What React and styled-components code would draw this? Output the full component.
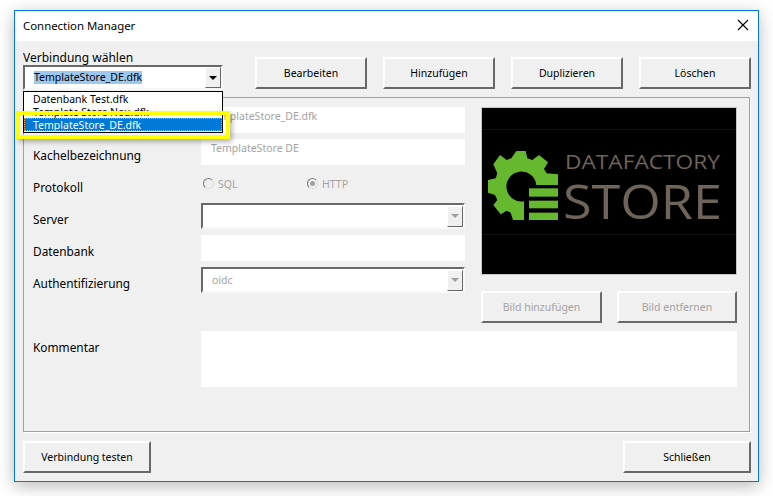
import React from "react";
import styled, { createGlobalStyle } from "styled-components";

const Global = createGlobalStyle`
  html, body { margin: 0; padding: 0; background: #fff; }
  body { font-family: "Noto Sans", Tahoma, sans-serif; font-size: 10.5px; color: #000; }
`;

const Page = styled.div`
  width: 773px;
  height: 496px;
  padding: 10px 14px 0 14px;
  box-sizing: border-box;
  overflow: hidden;
`;

const Win = styled.div`
  height: 472px;
  box-sizing: border-box;
  border: 1px solid #0078d7;
  background: #f0f0f0;
  box-shadow: 0 4px 16px rgba(0, 0, 0, 0.28);
  display: flex;
  flex-direction: column;
`;

const TitleBar = styled.div`
  height: 30px;
  box-sizing: border-box;
  background: #fff;
  display: flex;
  align-items: center;
  justify-content: space-between;
  padding: 0 9px 2px 8px;
  font-size: 11.4px;
`;

const CloseIcon = styled.svg`
  display: block;
`;

const Body = styled.div`
  flex: 1;
  display: flex;
  flex-direction: column;
  padding: 0 7px 0 8px;
`;

const TopRow = styled.div`
  height: 56px;
  display: flex;
`;

const ChooseBox = styled.div`
  width: 200px;
  margin-right: 32px;
  padding-top: 9px;
  position: relative;
`;

const ChooseLabel = styled.div`
  font-size: 12px;
  line-height: 15px;
`;

const Actions = styled.div`
  display: flex;
  gap: 16px;
  padding-top: 16px;
`;

const Button = styled.button`
  width: ${(p) => p.$w || 112}px;
  height: 32px;
  box-sizing: border-box;
  padding: 0 0 1px;
  font: inherit;
  font-size: 10.5px;
  color: ${(p) => (p.disabled ? "#a3a3a3" : "#000")};
  background: #f0f0f0;
  border: 2px solid;
  border-color: #fff #696969 #696969 #fff;
`;

const Combo = styled.div`
  height: ${(p) => (p.$main ? 25 : 26)}px;
  box-sizing: border-box;
  background: #fff;
  border: 2px solid;
  border-color: #696969 #f8f8f8 #f8f8f8 #696969;
  display: flex;
  align-items: center;
  justify-content: space-between;
  padding-left: 9px;
  color: ${(p) => (p.$main ? "#000" : "#a3a3a3")};
  font-size: 10.5px;
`;

const Picked = styled.span`
  background: #9cc7ee;
  line-height: 13px;
`;

const ComboArrow = styled.div`
  width: 16px;
  height: 21px;
  flex: none;
  box-sizing: border-box;
  background: #f0f0f0;
  border: 1px solid;
  border-color: #fff #696969 #696969 #fff;
  display: flex;
  align-items: center;
  justify-content: center;
  &::after {
    content: "";
    border: 4px solid transparent;
    border-top: 4px solid ${(p) => (p.$off ? "#a0a0a0" : "#000")};
    border-bottom: 0;
  }
`;

const List = styled.div`
  position: absolute;
  top: 50px;
  left: 0;
  width: 200px;
  height: 42px;
  box-sizing: border-box;
  background: #fff;
  border: 1px solid #000;
  font-size: 10.5px;
  line-height: 15px;
  z-index: 2;
  overflow: hidden;
`;

const Item = styled.div`
  height: 13px;
  padding-left: 9px;
  white-space: nowrap;
  color: ${(p) => (p.$on ? "#fff" : "#000")};
  background: ${(p) => (p.$on ? "#0078d7" : "transparent")};
  outline: ${(p) => (p.$on ? "1px dotted #f0a030" : "none")};
  outline-offset: -1px;
`;

const Marker = styled.div`
  position: absolute;
  top: 70px;
  left: -7px;
  width: 214px;
  height: 28px;
  box-sizing: border-box;
  border: 4px solid #ffff00;
  box-shadow: 2px 3px 5px rgba(0, 0, 0, 0.3);
  z-index: 3;
`;

const Panel = styled.div`
  height: 335px;
  width: 727px;
  box-sizing: border-box;
  border: 1px solid #a0a0a0;
  box-shadow: 1px 1px 0 #fff;
  padding: 9px 0 0 9px;
`;

const Columns = styled.div`
  display: flex;
  gap: 16px;
`;

const Fields = styled.div`
  width: 432px;
  display: flex;
  flex-direction: column;
  gap: 6px;
`;

const Row = styled.div`
  height: 26px;
  display: flex;
  align-items: center;
`;

const Label = styled.div`
  width: 168px;
  flex: none;
  font-size: 11.85px;
  line-height: 15px;
  padding-top: 6px;
`;

const NoteLabel = styled(Label)`
  align-self: flex-start;
  padding-top: 9px;
`;

const Input = styled.div`
  flex: 1;
  height: ${(p) => p.$h || 26}px;
  box-sizing: border-box;
  background: #fff;
  color: #a3a3a3;
  font-size: 10.5px;
  padding: ${(p) => (p.$shift ? "2px 0 0 10px" : "2px 0 0 8px")};
  line-height: 14px;
`;

const ComboCell = styled.div`
  flex: 1;
`;

const Radios = styled.div`
  display: flex;
  color: #a3a3a3;
  font-size: 10.5px;
  padding-bottom: 1px;
`;

const Radio = styled.label`
  width: 104px;
  display: flex;
  align-items: center;
  gap: 4px;
  padding-left: 2px;
  box-sizing: border-box;
`;

const Dot = styled.span`
  width: 11px;
  height: 11px;
  box-sizing: border-box;
  border-radius: 50%;
  border: 1.5px solid;
  border-color: #777 #ddd #ddd #777;
  background: #f0f0f0;
  display: flex;
  align-items: center;
  justify-content: center;
  &::after {
    content: "";
    width: 5px;
    height: 5px;
    border-radius: 50%;
    background: ${(p) => (p.$on ? "#a0a0a0" : "transparent")};
  }
`;

const Side = styled.div`
  width: 256px;
  display: flex;
  flex-direction: column;
`;

const Logo = styled.svg`
  display: block;
  width: 256px;
  height: 168px;
  box-sizing: border-box;
  border: 1px solid #c8c8c8;
  background: #000;
`;

const SideButtons = styled.div`
  display: flex;
  justify-content: space-between;
  margin-top: 16px;
`;

const CommentRow = styled.div`
  display: flex;
  width: 704px;
  margin-top: 8px;
`;

const Footer = styled.div`
  flex: 1;
  display: flex;
  justify-content: space-between;
  align-items: flex-start;
  padding-top: 9px;
`;

const Close = () => (
  <CloseIcon width="12" height="12" viewBox="0 0 12 12">
    <path d="M1 1 L11 11 M11 1 L1 11" stroke="#000" strokeWidth="1.1" fill="none" />
  </CloseIcon>
);

// gear outline traced at 3x, the bars sit in the open quarter
const GEAR =
  "M97 18 L125 18 L130 40 L145 45 L165 30 L192 52 L180 72 L188 85 L222 88 L222 120 L157 120 " +
  "A45 45 0 1 0 120 169 L120 225 L87 225 L80 203 L68 197 L50 208 L28 180 L40 165 L33 150 " +
  "L12 143 L12 105 L35 100 L40 85 L28 58 L48 30 L68 45 L82 40 Z";

const App = () => {
  return (
    <Page>
      <Global />
      <Win>
        <TitleBar>
          <span>Connection Manager</span>
          <Close />
        </TitleBar>
        <Body>
          <TopRow>
            <ChooseBox>
              <ChooseLabel>Verbindung wählen</ChooseLabel>
              <Combo $main>
                <Picked>TemplateStore_DE.dfk</Picked>
                <ComboArrow />
              </Combo>
              <List>
                <Item>Datenbank Test.dfk</Item>
                <Item>Template Store Neu.dfk</Item>
                <Item $on>TemplateStore_DE.dfk</Item>
              </List>
              <Marker />
            </ChooseBox>
            <Actions>
              <Button>Bearbeiten</Button>
              <Button>Hinzufügen</Button>
              <Button>Duplizieren</Button>
              <Button>Löschen</Button>
            </Actions>
          </TopRow>
          <Panel>
            <Columns>
              <Fields>
                <Row>
                  <Label>Dateiname</Label>
                  <Input>TemplateStore_DE.dfk</Input>
                </Row>
                <Row>
                  <Label>Kachelbezeichnung</Label>
                  <Input $shift>TemplateStore DE</Input>
                </Row>
                <Row>
                  <Label>Protokoll</Label>
                  <Radios>
                    <Radio><Dot />SQL</Radio>
                    <Radio><Dot $on />HTTP</Radio>
                  </Radios>
                </Row>
                <Row>
                  <Label>Server</Label>
                  <ComboCell>
                    <Combo>
                      <span />
                      <ComboArrow $off />
                    </Combo>
                  </ComboCell>
                </Row>
                <Row>
                  <Label>Datenbank</Label>
                  <Input />
                </Row>
                <Row>
                  <Label>Authentifizierung</Label>
                  <ComboCell>
                    <Combo>
                      <span>oidc</span>
                      <ComboArrow $off />
                    </Combo>
                  </ComboCell>
                </Row>
              </Fields>
              <Side>
                <Logo viewBox="0 0 254 166">
                  <path d="M0 21.5H254M0 126.5H254" stroke="#111" strokeWidth="1" />
                  <g transform="translate(2 37) scale(0.3333)" fill="#66b82e">
                    <path d={GEAR} />
                    <rect x="135" y="130" width="87" height="25" />
                    <rect x="135" y="167" width="87" height="23" />
                    <rect x="135" y="203" width="87" height="22" />
                  </g>
                  <text x="83" y="61" fontFamily="'Open Sans', sans-serif" fontSize="20.5" fill="#6f6459" textLength="155" lengthAdjust="spacingAndGlyphs">DATAFACTORY</text>
                  <text x="81" y="111" fontFamily="'Open Sans', sans-serif" fontSize="47" fill="#6f6459" textLength="159" lengthAdjust="spacingAndGlyphs">STORE</text>
                </Logo>
                <SideButtons>
                  <Button $w={121} disabled>Bild hinzufügen</Button>
                  <Button $w={120} disabled>Bild entfernen</Button>
                </SideButtons>
              </Side>
            </Columns>
            <CommentRow>
              <NoteLabel>Kommentar</NoteLabel>
              <Input $h={56} />
            </CommentRow>
          </Panel>
          <Footer>
            <Button $w={128}>Verbindung testen</Button>
            <Button $w={128}>Schließen</Button>
          </Footer>
        </Body>
      </Win>
    </Page>
  );
};

export default App;
